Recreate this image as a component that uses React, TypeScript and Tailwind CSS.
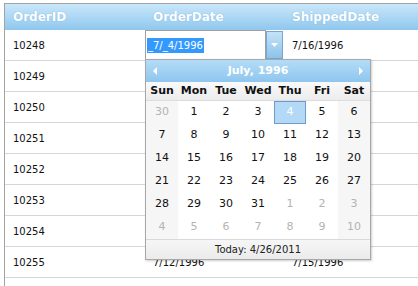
const rows = [
  { id: "10248", order: "", shipped: "7/16/1996" },
  { id: "10249", order: "", shipped: "" },
  { id: "10250", order: "", shipped: "" },
  { id: "10251", order: "", shipped: "" },
  { id: "10252", order: "", shipped: "" },
  { id: "10253", order: "", shipped: "" },
  { id: "10254", order: "", shipped: "" },
  { id: "10255", order: "7/12/1996", shipped: "7/15/1996" },
]

const days = ["Sun", "Mon", "Tue", "Wed", "Thu", "Fri", "Sat"]

// [label, muted]
const weeks: [string, boolean][][] = [
  [["30", true], ["1", false], ["2", false], ["3", false], ["4", false], ["5", false], ["6", false]],
  [["7", false], ["8", false], ["9", false], ["10", false], ["11", false], ["12", false], ["13", false]],
  [["14", false], ["15", false], ["16", false], ["17", false], ["18", false], ["19", false], ["20", false]],
  [["21", false], ["22", false], ["23", false], ["24", false], ["25", false], ["26", false], ["27", false]],
  [["28", false], ["29", false], ["30", false], ["31", false], ["1", true], ["2", true], ["3", true]],
  [["4", true], ["5", true], ["6", true], ["7", true], ["8", true], ["9", true], ["10", true]],
]

function Calendar() {
  return (
    <div className="absolute left-[145px] top-[59px] w-[226px] border border-[#a7a7a7] bg-white shadow-[1px_1px_2px_rgba(0,0,0,0.2)]">
      <div className="flex h-[22px] items-center justify-between bg-gradient-to-b from-[#b4dcf7] to-[#8ec6ee] px-[6px]">
        <svg width="6" height="8" viewBox="0 0 6 8">
          <path d="M5 0 L1 4 L5 8 Z" fill="#ffffff" />
        </svg>
        <span className="text-[11px] font-bold text-white">July, 1996</span>
        <svg width="6" height="8" viewBox="0 0 6 8">
          <path d="M1 0 L5 4 L1 8 Z" fill="#ffffff" />
        </svg>
      </div>
      <div className="grid h-[19px] grid-cols-7 items-center border-b border-[#dcdcdc] bg-gradient-to-b from-[#fafafa] to-[#ececec]">
        {days.map((d) => (
          <div key={d} className="text-center text-[11px] font-bold text-[#111]">
            {d}
          </div>
        ))}
      </div>
      <div className="grid grid-cols-7">
        {weeks.map((w, wi) =>
          w.map(([label, muted], di) => {
            const selected = wi === 0 && di === 4
            const weekend = di === 0 || di === 6
            return (
              <div
                key={wi + "-" + di}
                className={
                  "flex h-[23px] items-center justify-center text-[11px] " +
                  (selected
                    ? "border border-[#6d9cc9] bg-[#b3d9f6] text-white"
                    : weekend
                      ? "bg-[#f6f6f6] "
                      : "bg-white ") +
                  (selected ? "" : muted ? "text-[#b3b3b3]" : "text-[#111]")
                }
              >
                {label}
              </div>
            )
          })
        )}
      </div>
      <div className="flex h-[20px] items-center justify-center border-t border-[#d9d9d9] bg-gradient-to-b from-[#f6f6f6] to-[#ebebeb] text-[10px] text-[#222]">
        Today: 4/26/2011
      </div>
    </div>
  )
}

export default function App() {
  return (
    <div
      className="relative h-[286px] w-[418px] overflow-hidden bg-white pl-[4px] pt-[3px]"
      style={{ fontFamily: '"DejaVu Sans", Verdana, sans-serif' }}
    >
      <div className="h-full border-l border-t border-[#a3a3a3]">
        <div className="flex h-[26px] items-center bg-gradient-to-b from-[#c9e7fa] to-[#8fc7ee] text-[12px] font-bold text-white [text-shadow:0_0_1px_rgba(80,140,190,0.6)]">
          <div className="w-[140px] pl-[8px]">OrderID</div>
          <div className="w-[139px] pl-[8px]">OrderDate</div>
          <div className="flex-1 pl-[8px]">ShippedDate</div>
        </div>
        {rows.map((r, i) => (
          <div key={r.id} className="flex h-[31px] items-center border-b border-[#d6d6d6] text-[10px] text-[#111]">
            <div className="w-[140px] pl-[8px]">{r.id}</div>
            {i === 0 ? (
              <div className="flex h-full w-[139px] items-stretch">
                <div className="flex w-[121px] items-center border border-[#a0a0a0] bg-white pl-[1px]">
                  <span className="bg-[#3399ff] px-[1px] text-white">_7/_4/1996</span>
                </div>
                <div className="my-[1px] flex w-[17px] items-center justify-center border border-[#7aa6d2] bg-gradient-to-b from-[#c4e3f8] to-[#8cc3ea]">
                  <svg width="7" height="4" viewBox="0 0 7 4">
                    <path d="M0 0 L7 0 L3.5 4 Z" fill="#ffffff" />
                  </svg>
                </div>
              </div>
            ) : (
              <div className="w-[139px] pl-[8px]">{r.order}</div>
            )}
            <div className="flex-1 pl-[8px]">{r.shipped}</div>
          </div>
        ))}
      </div>
      <Calendar />
    </div>
  )
}
